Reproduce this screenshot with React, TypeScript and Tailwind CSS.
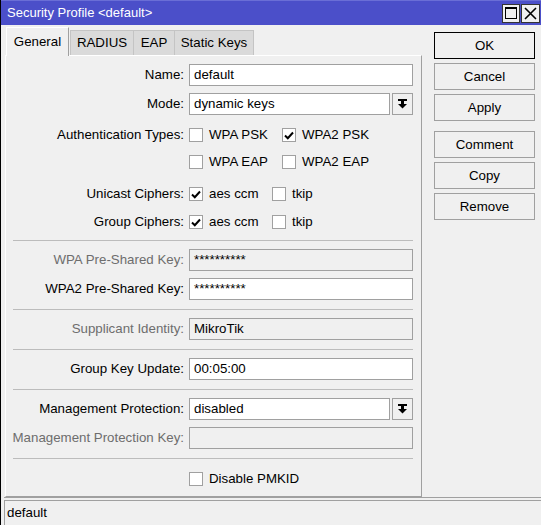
import React from "react";

// ── Small widgets ─────────────────────────────────────────────────────────────

function CheckBox({ checked }: { checked?: boolean }) {
    return (
        <div className="w-[14px] h-[14px] shrink-0 bg-white border border-[#a0a0a0] flex items-center justify-center">
            {checked && (
                <svg width="10" height="9" viewBox="0 0 10 9">
                    <polyline points="1,4.5 3.8,7.2 9,1.5" fill="none" stroke="#000" strokeWidth={2} />
                </svg>
            )}
        </div>
    );
}

function Check({ label, checked, width }: { label: string; checked?: boolean; width?: string }) {
    return (
        <div className={`flex items-center gap-[6px] ${width ?? ""}`}>
            <CheckBox checked={checked} />
            <span>{label}</span>
        </div>
    );
}

function DropArrow() {
    return (
        <svg width="9" height="10" viewBox="0 0 9 10">
            <rect x="0" y="0" width="9" height="2" fill="#000" />
            <rect x="3" y="2" width="3" height="3" fill="#000" />
            <polygon points="0,5 9,5 4.5,9.5" fill="#000" />
        </svg>
    );
}

function TextBox({ value, disabled }: { value?: string; disabled?: boolean }) {
    return (
        <div
            className={`w-[224px] h-[22px] border border-[#a0a0a0] flex items-center pl-[4px] ${
                disabled ? "bg-[#f0f0f0]" : "bg-white"
            }`}
        >
            {value}
        </div>
    );
}

function SelectBox({ value }: { value: string }) {
    return (
        <div className="flex gap-[2px] w-[224px] h-[22px]">
            <div className="flex-1 border border-[#a0a0a0] bg-white flex items-center pl-[4px]">{value}</div>
            <div className="w-[21px] border border-[#a0a0a0] bg-[#f0f0f0] flex items-center justify-center">
                <DropArrow />
            </div>
        </div>
    );
}

function Row({
    label,
    disabled,
    mt,
    children,
}: {
    label?: string;
    disabled?: boolean;
    mt: string;
    children: React.ReactNode;
}) {
    return (
        <div className={`flex items-center h-[22px] ${mt}`}>
            <div
                className={`w-[178px] mr-[5px] text-right whitespace-nowrap ${
                    disabled ? "text-[#6d6d6d]" : "text-black"
                }`}
            >
                {label}
            </div>
            {children}
        </div>
    );
}

function Sep({ mt }: { mt: string }) {
    return <div className={`ml-[7px] w-[400px] h-px bg-[#bcbcbc] ${mt}`} />;
}

function SideButton({ label, primary, mt }: { label: string; primary?: boolean; mt: string }) {
    return (
        <div
            className={`w-[101px] h-[27px] flex items-center justify-center bg-[#f0f0f0] border ${
                primary ? "border-black" : "border-[#a0a0a0]"
            } ${mt}`}
        >
            {label}
        </div>
    );
}

// ── Window ────────────────────────────────────────────────────────────────────

export default function App() {
    return (
        <div
            className="w-[541px] h-[525px] bg-[#f0f0f0] flex flex-col overflow-hidden border-l border-black text-[13.3px] text-black"
            style={{ fontFamily: '"Liberation Sans", Arial, sans-serif' }}
        >
            {/* title bar */}
            <div className="h-[25px] shrink-0 bg-[#4b4fc9] border-t border-[#6a6ed6] flex items-center pl-[6px] pr-[1px] text-[13px]">
                <span className="text-white flex-1">Security Profile &lt;default&gt;</span>
                <div className="flex gap-[1px]">
                    <div className="w-[18px] h-[19px] bg-[#f0f0f0] border border-[#333] flex items-center justify-center">
                        <div className="w-[12px] h-[12px] border border-black border-t-2" />
                    </div>
                    <div className="w-[19px] h-[19px] bg-[#f0f0f0] border border-[#333] flex items-center justify-center">
                        <svg width="13" height="13" viewBox="0 0 13 13">
                            <path d="M1 1 L12 12 M12 1 L1 12" stroke="#000" strokeWidth={1.6} />
                        </svg>
                    </div>
                </div>
            </div>

            {/* body */}
            <div className="flex h-[472px] shrink-0">
                {/* tabs + panel */}
                <div className="pl-[4px] flex flex-col">
                    <div className="h-[30px] flex items-end pl-[1px]">
                        <div className="relative z-10 w-[63px] h-[29px] -mb-px bg-[#f0f0f0] border-t border-l border-white border-r border-r-[#a0a0a0] flex items-center justify-center">
                            General
                        </div>
                        <div className="w-[64px] h-[25px] ml-[1px] bg-[#dadada] border border-b-0 border-[#c4c4c4] flex items-center justify-center">
                            RADIUS
                        </div>
                        <div className="w-[41px] h-[25px] bg-[#dadada] border border-b-0 border-l-0 border-[#c4c4c4] flex items-center justify-center">
                            EAP
                        </div>
                        <div className="w-[79px] h-[25px] bg-[#dadada] border border-b-0 border-l-0 border-[#c4c4c4] flex items-center justify-center">
                            Static Keys
                        </div>
                    </div>

                    <div className="w-[417px] h-[442px] border-t border-l border-white border-r border-r-[#a0a0a0] border-b border-b-[#a0a0a0] flex flex-col">
                        <Row label="Name:" mt="mt-[8px]">
                            <TextBox value="default" />
                        </Row>
                        <Row label="Mode:" mt="mt-[7px]">
                            <SelectBox value="dynamic keys" />
                        </Row>
                        <Row label="Authentication Types:" mt="mt-[9px]">
                            <Check label="WPA PSK" width="w-[93px]" />
                            <Check label="WPA2 PSK" checked />
                        </Row>
                        <Row mt="mt-[5px]">
                            <Check label="WPA EAP" width="w-[93px]" />
                            <Check label="WPA2 EAP" />
                        </Row>
                        <Row label="Unicast Ciphers:" mt="mt-[10px]">
                            <Check label="aes ccm" checked width="w-[83px]" />
                            <Check label="tkip" />
                        </Row>
                        <Row label="Group Ciphers:" mt="mt-[6px]">
                            <Check label="aes ccm" checked width="w-[83px]" />
                            <Check label="tkip" />
                        </Row>
                        <Sep mt="mt-[7px]" />
                        <Row label="WPA Pre-Shared Key:" disabled mt="mt-[8px]">
                            <TextBox value="**********" disabled />
                        </Row>
                        <Row label="WPA2 Pre-Shared Key:" mt="mt-[7px]">
                            <TextBox value="**********" />
                        </Row>
                        <Sep mt="mt-[9px]" />
                        <Row label="Supplicant Identity:" disabled mt="mt-[8px]">
                            <TextBox value="MikroTik" disabled />
                        </Row>
                        <Sep mt="mt-[9px]" />
                        <Row label="Group Key Update:" mt="mt-[8px]">
                            <TextBox value="00:05:00" />
                        </Row>
                        <Sep mt="mt-[9px]" />
                        <Row label="Management Protection:" mt="mt-[8px]">
                            <SelectBox value="disabled" />
                        </Row>
                        <Row label="Management Protection Key:" disabled mt="mt-[7px]">
                            <TextBox disabled />
                        </Row>
                        <Sep mt="mt-[9px]" />
                        <Row mt="mt-[9px]">
                            <Check label="Disable PMKID" />
                        </Row>
                    </div>
                </div>

                {/* side buttons */}
                <div className="ml-[12px] flex flex-col pt-[7px]">
                    <SideButton label="OK" primary mt="mt-0" />
                    <SideButton label="Cancel" mt="mt-[4px]" />
                    <SideButton label="Apply" mt="mt-[4px]" />
                    <SideButton label="Comment" mt="mt-[10px]" />
                    <SideButton label="Copy" mt="mt-[4px]" />
                    <SideButton label="Remove" mt="mt-[4px]" />
                </div>
            </div>

            {/* status bar */}
            <div className="flex-1 ml-[3px] flex flex-col border-t border-[#a0a0a0]">
                <div className="flex-1 mt-[2px] border-t border-l border-[#a0a0a0] flex items-center pl-[2px]">
                    default
                </div>
            </div>
        </div>
    );
}
